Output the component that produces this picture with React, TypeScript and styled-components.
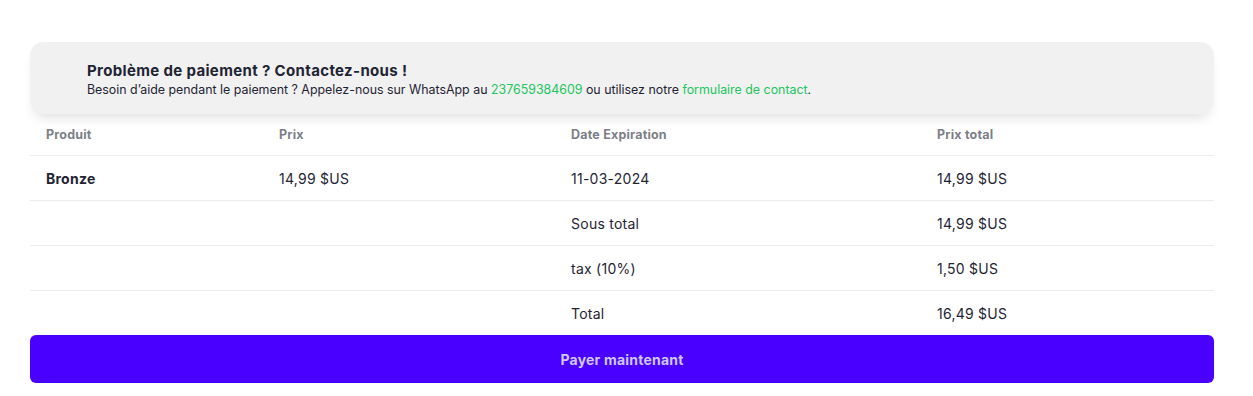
import * as React from 'react';
import styled, { createGlobalStyle } from 'styled-components';

const Global = createGlobalStyle`
  html, body {
    margin: 0;
    padding: 0;
    background: #ffffff;
    font-family: "Inter", "Noto Sans", sans-serif;
    color: #1f2433;
  }
`

const Page = styled.div`
  padding: 42px 39px 0 30px;
`

const HelpCard = styled.div`
  background: #f1f1f1;
  border-radius: 14px;
  box-shadow: 0 8px 12px -4px rgba(0, 0, 0, 0.12);
  padding: 20px 57px 16px;
  height: 72px;
  box-sizing: border-box;
  position: relative;
  z-index: 1;
`

const HelpTitle = styled.div`
  font-size: 15px;
  font-weight: 700;
  line-height: 18px;
  letter-spacing: 0.35px;
  color: #1f2433;
`

const HelpText = styled.div`
  margin-top: 2px;
  font-size: 12.4px;
  line-height: 16px;
  color: #1f2433;
`

const GreenLink = styled.a`
  color: #22c55e;
  text-decoration: none;
`

const Table = styled.table`
  width: 100%;
  border-collapse: collapse;
  table-layout: fixed;
`

const HeadCell = styled.th`
  text-align: left;
  font-size: 12.5px;
  font-weight: 700;
  letter-spacing: 0.2px;
  color: #7c7f88;
  height: 41px;
  padding: 0 16px;
  border-bottom: 1px solid #ededed;
`

const Row = styled.tr<{ $last?: boolean }>`
  border-bottom: ${p => (p.$last ? 'none' : '1px solid #ededed')};
`

const Cell = styled.td<{ $bold?: boolean }>`
  font-size: 14px;
  font-weight: ${p => (p.$bold ? 700 : 400)};
  letter-spacing: 0.25px;
  height: 44px;
  padding: 0 16px;
  color: #1f2433;
`

const PayButton = styled.button`
  display: block;
  width: 100%;
  height: 48px;
  border: none;
  border-radius: 6px;
  background: #4a00ff;
  color: #cfc8ff;
  font-family: inherit;
  font-size: 14px;
  font-weight: 700;
  letter-spacing: 0.2px;
  cursor: pointer;
`

const summary = [
  { label: 'Sous total', value: '14,99 $US' },
  { label: 'tax (10%)', value: '1,50 $US' },
  { label: 'Total', value: '16,49 $US' },
]

export default function App() {
  return (
    <Page>
      <Global />
      <HelpCard>
        <HelpTitle>Problème de paiement ? Contactez-nous !</HelpTitle>
        <HelpText>
          Besoin d’aide pendant le paiement ? Appelez-nous sur WhatsApp au{' '}
          <GreenLink href="#">237659384609</GreenLink> ou utilisez notre{' '}
          <GreenLink href="#">formulaire de contact</GreenLink>.
        </HelpText>
      </HelpCard>
      <Table>
        <colgroup>
          <col style={{ width: 233 }} />
          <col style={{ width: 292 }} />
          <col style={{ width: 366 }} />
          <col />
        </colgroup>
        <thead>
          <tr>
            <HeadCell>Produit</HeadCell>
            <HeadCell>Prix</HeadCell>
            <HeadCell>Date Expiration</HeadCell>
            <HeadCell>Prix total</HeadCell>
          </tr>
        </thead>
        <tbody>
          <Row>
            <Cell $bold>Bronze</Cell>
            <Cell>14,99 $US</Cell>
            <Cell>11-03-2024</Cell>
            <Cell>14,99 $US</Cell>
          </Row>
          {summary.map((s, i) => (
            <Row key={s.label} $last={i === summary.length - 1}>
              <Cell />
              <Cell />
              <Cell>{s.label}</Cell>
              <Cell>{s.value}</Cell>
            </Row>
          ))}
        </tbody>
      </Table>
      <PayButton>Payer maintenant</PayButton>
    </Page>
  );
}
